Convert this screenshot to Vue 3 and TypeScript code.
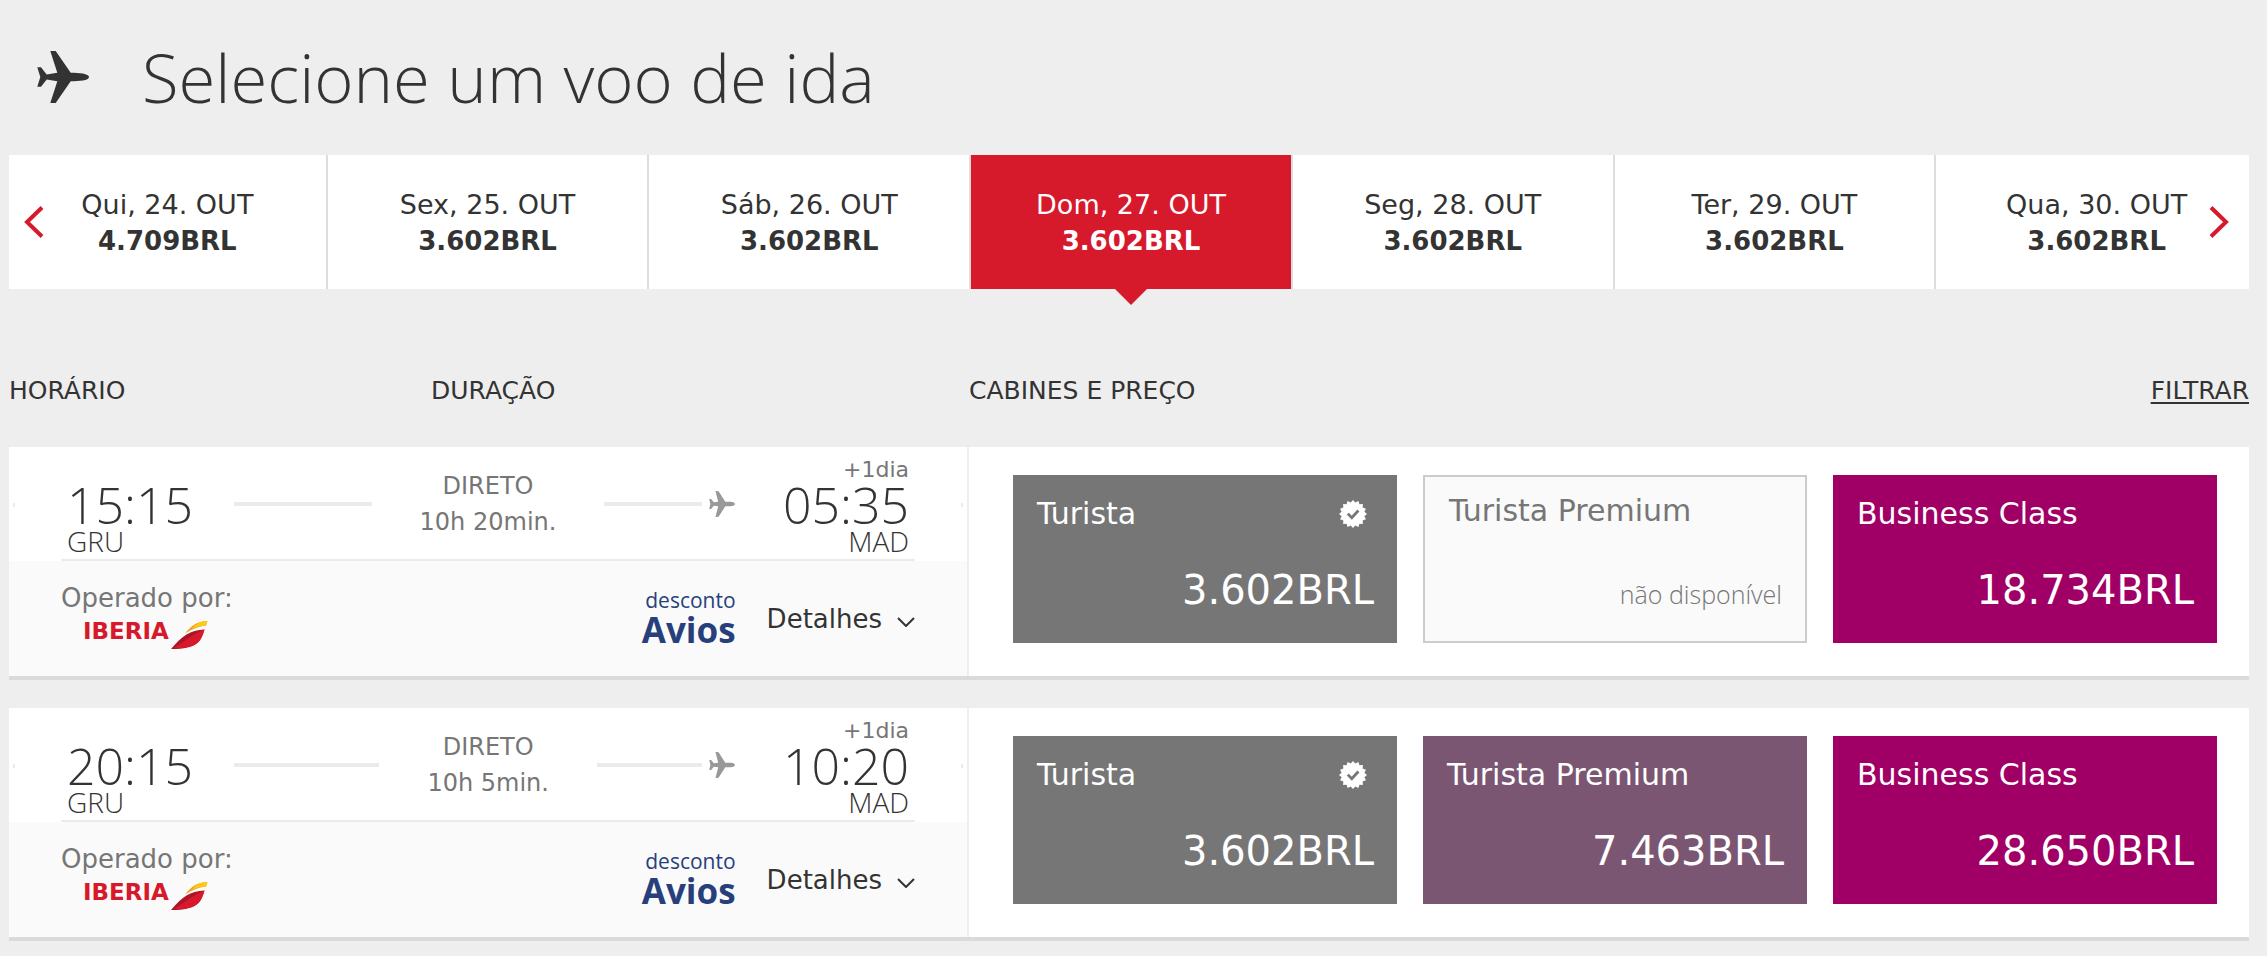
<script setup lang="ts">
import { ref } from 'vue'

interface Day {
  label: string
  price: string
}

interface Cabin {
  name: string
  kind: 'tourist' | 'premium' | 'business'
  price: string | null
  verified?: boolean
}

interface Flight {
  departure: string
  from: string
  arrival: string
  to: string
  duration: string
  cabins: Cabin[]
}

const days: Day[] = [
  { label: 'Qui, 24. OUT', price: '4.709BRL' },
  { label: 'Sex, 25. OUT', price: '3.602BRL' },
  { label: 'Sáb, 26. OUT', price: '3.602BRL' },
  { label: 'Dom, 27. OUT', price: '3.602BRL' },
  { label: 'Seg, 28. OUT', price: '3.602BRL' },
  { label: 'Ter, 29. OUT', price: '3.602BRL' },
  { label: 'Qua, 30. OUT', price: '3.602BRL' },
]

const selected = ref(3)

function move(step: number): void {
  selected.value = Math.min(days.length - 1, Math.max(0, selected.value + step))
}

const flights: Flight[] = [
  {
    departure: '15:15',
    from: 'GRU',
    arrival: '05:35',
    to: 'MAD',
    duration: '10h 20min.',
    cabins: [
      { name: 'Turista', kind: 'tourist', price: '3.602BRL', verified: true },
      { name: 'Turista Premium', kind: 'premium', price: null },
      { name: 'Business Class', kind: 'business', price: '18.734BRL' },
    ],
  },
  {
    departure: '20:15',
    from: 'GRU',
    arrival: '10:20',
    to: 'MAD',
    duration: '10h 5min.',
    cabins: [
      { name: 'Turista', kind: 'tourist', price: '3.602BRL', verified: true },
      { name: 'Turista Premium', kind: 'premium', price: '7.463BRL' },
      { name: 'Business Class', kind: 'business', price: '28.650BRL' },
    ],
  },
]

// Outline of the scalloped seal: 16 teeth between two radii.
const seal = Array.from({ length: 32 }, (_, i) => {
  const r = i % 2 === 0 ? 14 : 11.6
  const a = (i * Math.PI) / 16
  return `${(14 + r * Math.sin(a)).toFixed(2)},${(14 - r * Math.cos(a)).toFixed(2)}`
}).join(' ')
</script>

<template>
  <main class="page">
    <header class="heading">
      <svg class="heading-plane" viewBox="0 0 52 52" aria-hidden="true">
        <path d="M13.3 0h5.4L33.7 21.7C42 21.9 52 22.4 52 26s-10 4.1-18.3 4.3L18.7 52h-5.4l7-21.7L9.7 28.6 4 35.7H.3L3.3 26 .3 16.3H4l5.7 7.1 10.6-1.7z" />
      </svg>
      <h1>Selecione um voo de ida</h1>
    </header>

    <nav class="days" aria-label="Datas">
      <button
        v-for="(day, i) in days"
        :key="day.label"
        type="button"
        class="day"
        :class="{ selected: i === selected }"
        @click="selected = i"
      >
        <span>{{ day.label }}</span>
        <strong>{{ day.price }}</strong>
      </button>
      <button type="button" class="arrow prev" aria-label="Anterior" @click="move(-1)">
        <svg viewBox="0 0 20 32"><path d="M18 1.500 3 16l15 14.500" /></svg>
      </button>
      <button type="button" class="arrow next" aria-label="Seguinte" @click="move(1)">
        <svg viewBox="0 0 20 32"><path d="M2 1.500 17 16 2 30.500" /></svg>
      </button>
    </nav>

    <div class="columns">
      <span>HORÁRIO</span>
      <span>DURAÇÃO</span>
      <div class="columns-end">
        <span>CABINES E PREÇO</span>
        <a href="#filtrar">FILTRAR</a>
      </div>
    </div>

    <article v-for="flight in flights" :key="flight.departure" class="flight">
      <section class="info">
        <div class="timeline">
          <i class="stub"></i>
          <div class="journey">
            <div class="stop departure">
              <time>{{ flight.departure }}</time>
              <abbr>{{ flight.from }}</abbr>
            </div>
            <div class="route">
              <div class="leg first"><i class="line"></i></div>
              <p class="duration">DIRETO<br />{{ flight.duration }}</p>
              <div class="leg second">
                <i class="line"></i>
                <svg class="route-plane" viewBox="0 0 26 26" aria-hidden="true">
                  <path d="M6.500 0h2c.7 0 1 .2 1.400.8l6.400 9.900h5.200c2.700 0 4.500 1.100 4.500 2.300s-1.800 2.300-4.500 2.300h-5.200L9.900 25.200c-.4.600-.7.800-1.400.8h-2l2.700-10.700-4.400-.5L2.600 17.600c-.3.400-.6.500-1 .5H.2L1.400 13 .2 7.900h1.400c.4 0 .7.100 1 .5l2.200 2.800 4.400-.5z" />
                </svg>
              </div>
            </div>
            <div class="stop arrival">
              <small>+1dia</small>
              <time>{{ flight.arrival }}</time>
              <abbr>{{ flight.to }}</abbr>
            </div>
          </div>
          <i class="stub"></i>
        </div>

        <div class="operation">
          <div class="operator">
            <span>Operado por:</span>
            <div class="iberia">
              <b>IBERIA</b>
              <svg viewBox="0 0 37 29" aria-hidden="true">
                <path fill="#ab1429" d="M0 28C11 15 19 9 33.500 8.500 30 20 27 28 0 28z" />
                <path fill="#d8192c" d="M3 27C16 19 22 13 33.500 8.500 30 20 27 28 3 27z" />
                <path fill="#f0a01e" d="M14 12.500C20 5 26 0 36.500 0L35 4.500C27 5.500 21 8 14 12.500z" />
                <path fill="#fccb12" d="M21 7.500C26 2 30 0 36.500 0L35 4.500C29 5 25 6 21 7.500z" />
              </svg>
            </div>
          </div>
          <div class="avios">
            <span>desconto</span>
            <b>Avios</b>
          </div>
          <button type="button" class="details">
            Detalhes
            <svg viewBox="0 0 18 10" aria-hidden="true"><path d="M1 1l8 8 8-8" /></svg>
          </button>
        </div>
      </section>

      <section class="cabins">
        <button
          v-for="cabin in flight.cabins"
          :key="cabin.name"
          type="button"
          class="cabin"
          :class="cabin.price ? cabin.kind : 'unavailable'"
          :disabled="!cabin.price"
        >
          <span class="cabin-name">
            {{ cabin.name }}
            <svg v-if="cabin.verified" viewBox="0 0 28 28" aria-hidden="true">
              <polygon :points="seal" fill="#fff" />
              <path d="M8.800 13.600l4 4.200 6.600-7.300" fill="none" stroke="#767676" stroke-width="2.800" />
            </svg>
          </span>
          <span class="cabin-price">{{ cabin.price ?? 'não disponível' }}</span>
        </button>
      </section>
    </article>
  </main>
</template>

<style>
body {
  background: #eee;
}
</style>

<style scoped>
.page {
  padding: 0 18px 8px 9px;
  color: #333;
  font-family: "DejaVu Sans", Verdana, sans-serif;
  font-size: 26px;
}

button {
  margin: 0;
  padding: 0;
  border: 0;
  background: none;
  color: inherit;
  font: inherit;
  cursor: pointer;
}

.heading {
  display: flex;
  align-items: center;
  gap: 53px;
  padding: 37px 0 38px 28px;
}

.heading-plane {
  width: 52px;
  height: 52px;
  fill: #333;
}

h1 {
  margin: 0;
  font-family: "Open Sans", "Noto Sans", sans-serif;
  font-size: 67px;
  font-weight: 300;
  line-height: 80px;
}

.days {
  position: relative;
  display: grid;
  grid-template-columns: 317fr repeat(5, 322fr) 315fr;
}

.day {
  position: relative;
  display: flex;
  flex-direction: column;
  align-items: center;
  padding: 31px 0 29px;
  border-left: 2px solid #ddd;
  background: #fff;
  line-height: 37px;
}

.day span {
  font-size: 27px;
}

.day:first-child {
  border-left: 0;
}

.day:nth-child(7) {
  padding-left: 8px;
}

.day.selected {
  background: #d7192c;
  background-clip: padding-box;
  color: #fff;
}

.day.selected::after {
  content: "";
  position: absolute;
  top: 100%;
  left: 50%;
  margin-left: -16px;
  border: 16px solid transparent;
  border-top-color: #d7192c;
  border-bottom: 0;
}

.arrow {
  position: absolute;
  top: 50%;
  width: 20px;
  height: 32px;
  margin-top: -16px;
}

.prev {
  left: 15px;
}

.next {
  right: 20px;
}

.arrow svg {
  display: block;
  fill: none;
  stroke: #d7192c;
  stroke-width: 4;
}

.columns {
  display: grid;
  grid-template-columns: 422fr 538fr 1280fr;
  margin: 86px 0 40px;
  font-size: 25px;
  line-height: 32px;
}

.columns-end {
  display: flex;
  justify-content: space-between;
}

.columns a {
  color: inherit;
  text-decoration-thickness: 2px;
  text-underline-offset: 3px;
}

.flight {
  display: grid;
  grid-template-columns: 3fr 4fr;
  margin-bottom: 28px;
  border-bottom: 4px solid #dadada;
  background: #fff;
}

.flight:last-child {
  margin-bottom: 0;
}

.info {
  display: flex;
  flex-direction: column;
  border-right: 2px solid #eee;
}

.timeline {
  display: flex;
  gap: 46px;
  padding: 0 4px;
}

.stub {
  width: 2px;
  height: 4px;
  margin-top: 56px;
  background: #ebebeb;
}

.journey {
  display: flex;
  flex: 1;
  align-items: flex-end;
  padding-bottom: 4px;
  border-bottom: 2px solid #ebebeb;
}

.stop {
  display: flex;
  flex-direction: column;
  font-family: "Open Sans", "Noto Sans", sans-serif;
  font-weight: 300;
}

.departure {
  width: 167px;
  padding-left: 6px;
}

.arrival {
  width: 174px;
  padding: 11px 6px 0 0;
  text-align: right;
}

.stop small {
  color: #767676;
  font: 22px/24px "DejaVu Sans", Verdana, sans-serif;
}

.stop time {
  font-size: 50px;
  line-height: 46px;
}

.stop abbr {
  font-size: 28px;
  line-height: 27px;
}

.route {
  display: flex;
  flex: 1;
  align-items: center;
  align-self: flex-start;
  margin-top: 21px;
}

.leg {
  display: flex;
  align-items: center;
  gap: 7px;
}

.first {
  flex: 138 0 0;
}

.second {
  flex: 131 0 0;
}

.line {
  flex: 1;
  height: 4px;
  background: #ebebeb;
}

.route-plane {
  width: 26px;
  height: 26px;
  fill: #999;
}

.duration {
  margin: 0 48px;
  color: #767676;
  font-size: 24px;
  line-height: 36px;
  text-align: center;
}

.operation {
  display: flex;
  flex: 1;
  align-items: flex-start;
  padding: 0 52px;
  background: #fafafa;
}

.operator {
  margin: 21px auto 26px 0;
  color: #767676;
  line-height: 32px;
}

.iberia {
  display: flex;
  align-items: flex-start;
  gap: 2px;
  margin: 7px 0 0 22px;
  color: #d7192c;
}

.iberia b {
  font-size: 23px;
  line-height: 20px;
}

.iberia svg {
  width: 37px;
  height: 29px;
}

.avios {
  display: flex;
  flex-direction: column;
  align-items: flex-end;
  margin: 26px 31px 0 0;
  color: #27407c;
  font-family: "Open Sans", "Noto Sans", sans-serif;
}

.avios span {
  font-size: 21px;
  font-weight: 500;
  line-height: 26px;
}

.avios b {
  font-size: 35px;
  line-height: 34px;
}

.details {
  display: flex;
  align-items: center;
  gap: 15px;
  margin-top: 42px;
  line-height: 32px;
}

.details svg {
  width: 18px;
  height: 10px;
  margin-top: 6px;
  fill: none;
  stroke: #333;
  stroke-width: 2;
}

.cabins {
  display: grid;
  grid-template-columns: repeat(3, 1fr);
  gap: 26px;
  padding: 28px 32px 33px 44px;
}

.cabin {
  display: flex;
  flex-direction: column;
  justify-content: space-between;
  padding: 19px 23px 28px;
  color: #fff;
}

.cabin-name {
  display: flex;
  align-items: center;
  align-self: stretch;
  justify-content: space-between;
  padding: 0 7px 0 1px;
  font-size: 30px;
  line-height: 40px;
}

.cabin-name svg {
  width: 28px;
  height: 28px;
}

.cabin-price {
  align-self: flex-end;
  font-size: 40px;
  line-height: 50px;
}

.tourist {
  background: #767676;
}

.premium {
  background: #7b5673;
}

.business {
  background: #a00066;
}

.unavailable {
  padding-top: 14px;
  padding-bottom: 22px;
  border: 2px solid #ccc;
  background: #fafafa;
  color: #767676;
}

.unavailable .cabin-price {
  font-family: "Open Sans", "Noto Sans", sans-serif;
  font-size: 25px;
  font-weight: 300;
}
</style>
